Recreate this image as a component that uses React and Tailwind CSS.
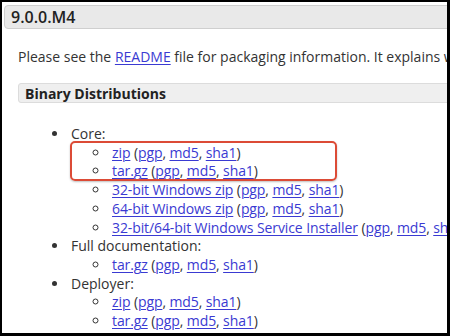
import React from 'react';

const A = ({ children }) => (
  <a href="#" className="text-[#3a3ad2] underline underline-offset-[2px] decoration-1">
    {children}
  </a>
);

const Sums = () => (
  <>
    {' ('}
    <A>pgp</A>, <A>md5</A>, <A>sha1</A>)
  </>
);

const Sub = ({ items }) => (
  <ul className="list-[circle] pl-[39px]">
    {items.map((it, i) => (
      <li key={i} className="pl-[2px] whitespace-nowrap tracking-[-0.1px]">
        <A>{it}</A>
        <Sums />
      </li>
    ))}
  </ul>
);

export default function App() {
  return (
    <div className="w-[450px] h-[336px] bg-black pl-[2px] pt-[2px] pr-[3px] pb-[3px]">
      <div
        className="relative w-full h-full bg-white overflow-hidden text-[#333] text-[14px]"
        style={{ fontFamily: '"Open Sans", "Noto Sans", sans-serif' }}
      >
        {/* Titel */}
        <div className="mt-[3px] ml-[2px] -mr-[6px] h-[24px] flex items-center pl-[6px] bg-[#e9e9e9] border border-[#cfcfcf] rounded-[4px] text-[16px] font-semibold text-[#222]">
          9.0.0.M4
        </div>

        <p className="mt-[18px] ml-[16px] whitespace-nowrap leading-[20px]">
          Please see the <A>README</A> file for packaging information. It explains what every distribution contains.
        </p>

        <div className="mt-[16px] ml-[16px] -mr-[6px] h-[20px] flex items-center pl-[6px] bg-[#efefef] border border-[#dcdcdc] rounded-[3px] font-bold text-[#222]">
          Binary Distributions
        </div>

        <ul className="list-disc pl-[67px] mt-[22px] leading-[18.7px]">
          <li className="pl-[2px]">
            Core:
            <Sub
              items={[
                'zip',
                'tar.gz',
                '32-bit Windows zip',
                '64-bit Windows zip',
                '32-bit/64-bit Windows Service Installer',
              ]}
            />
          </li>
          <li className="pl-[2px]">
            Full documentation:
            <Sub items={['tar.gz']} />
          </li>
          <li className="pl-[2px]">
            Deployer:
            <Sub items={['zip', 'tar.gz']} />
          </li>
        </ul>

        {/* Markierung */}
        <div className="absolute left-[68px] top-[139px] w-[267px] h-[40px] border-[2.5px] border-[#dc4b36] rounded-[5px] shadow-[0_1px_2px_rgba(0,0,0,0.25)]" />
      </div>
    </div>
  );
}
